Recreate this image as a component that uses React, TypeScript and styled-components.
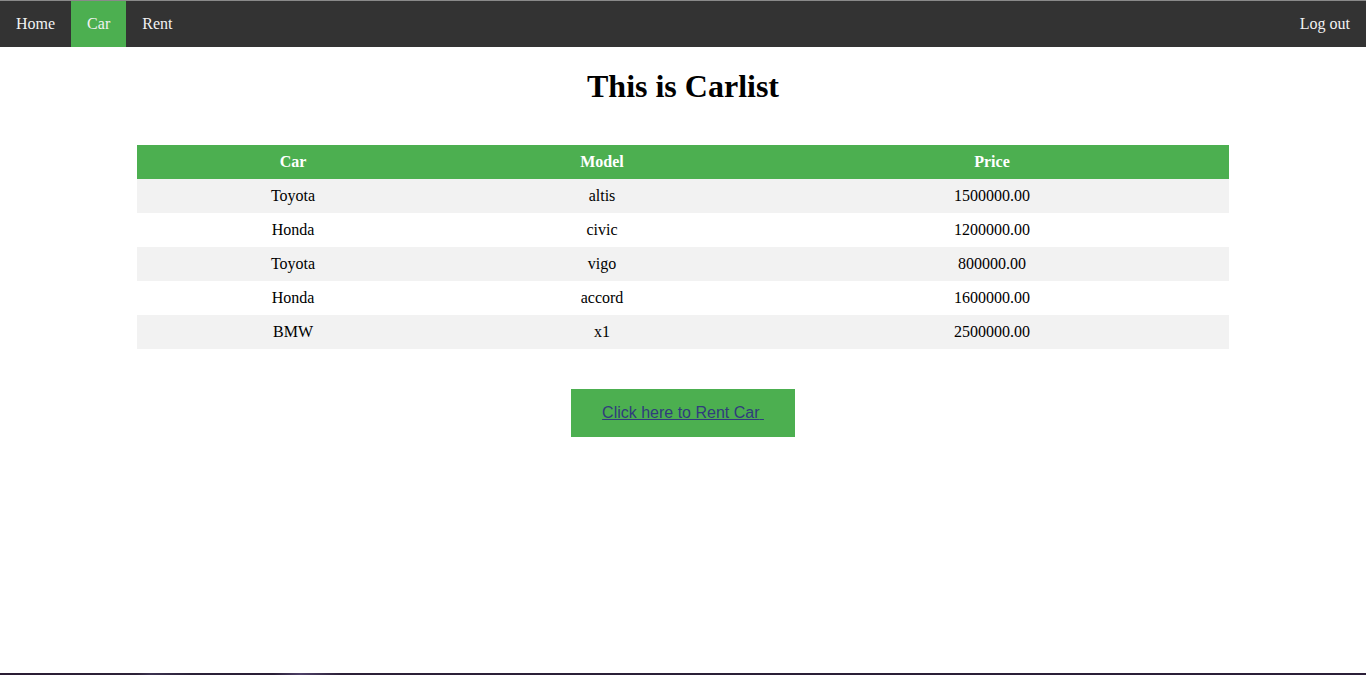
import React from "react";
import styled, { createGlobalStyle } from "styled-components";

const Global = createGlobalStyle`
  html, body { margin: 0; padding: 0; background: #fff; }
  body { font-family: "Liberation Serif", "Times New Roman", serif; font-size: 16px; }
`;

const Page = styled.div`
  min-height: 675px;
  display: flex;
  flex-direction: column;
`;

const TopNav = styled.nav`
  display: flex;
  background: #333333;
  border-top: 1px solid #8a8a8a;
`;

const NavLink = styled.a<{ $active?: boolean; $right?: boolean }>`
  display: block;
  padding: 14px 16px;
  line-height: 18px;
  color: #f2f2f2;
  text-decoration: none;
  font-size: 16px;
  background: ${(p) => (p.$active ? "#4CAF50" : "transparent")};
  margin-left: ${(p) => (p.$right ? "auto" : "0")};
`;

const Main = styled.main`
  flex: 1;
  display: flex;
  flex-direction: column;
  align-items: center;
`;

const Title = styled.h1`
  font-size: 32px;
  line-height: 37px;
  margin: 21px 0 40px;
  font-weight: bold;
  color: #000;
`;

const Table = styled.table`
  width: 1092px;
  border-collapse: collapse;
  text-align: center;
`;

const Th = styled.th`
  background: #4CAF50;
  color: #fff;
  padding: 8px;
  line-height: 18px;
  font-weight: bold;
`;

const Row = styled.tr`
  &:nth-child(odd) { background: #f2f2f2; }
`;

const Td = styled.td`
  padding: 8px;
  line-height: 18px;
  color: #000;
`;

const RentButton = styled.div`
  margin-top: 40px;
  background: #4CAF50;
  padding: 15px 31px 15px 31px;
  line-height: 18px;
`;

const RentLink = styled.a`
  font-family: "Liberation Sans", Arial, sans-serif;
  font-size: 16px;
  color: #303c7c;
  text-decoration: underline;
`;

const BottomStrip = styled.div`
  height: 2px;
  background: linear-gradient(90deg, #2a1c34 0%, #2d2238 10%, #3c3250 11%, #2b2138 14%, #2a1e36 20%, #4e4068 22%, #2c2038 25%, #2a1f37 60%, #2b1f38 100%);
`;

const cars = [
  ["Toyota", "altis", "1500000.00"],
  ["Honda", "civic", "1200000.00"],
  ["Toyota", "vigo", "800000.00"],
  ["Honda", "accord", "1600000.00"],
  ["BMW", "x1", "2500000.00"],
];

export default function App() {
  return (
    <Page>
      <Global />
      <TopNav>
        <NavLink href="#">Home</NavLink>
        <NavLink href="#" $active>Car</NavLink>
        <NavLink href="#">Rent</NavLink>
        <NavLink href="#" $right>Log out</NavLink>
      </TopNav>
      <Main>
        <Title>This is Carlist</Title>
        <Table>
          <colgroup>
            <col style={{ width: 312 }} />
            <col style={{ width: 306 }} />
            <col style={{ width: 474 }} />
          </colgroup>
          <thead>
            <tr>
              <Th>Car</Th>
              <Th>Model</Th>
              <Th>Price</Th>
            </tr>
          </thead>
          <tbody>
            {cars.map((c, i) => (
              <Row key={i}>
                <Td>{c[0]}</Td>
                <Td>{c[1]}</Td>
                <Td>{c[2]}</Td>
              </Row>
            ))}
          </tbody>
        </Table>
        <RentButton>
          <RentLink href="#">Click here to Rent Car{"\u00a0"}</RentLink>
        </RentButton>
      </Main>
      <BottomStrip />
    </Page>
  );
}
